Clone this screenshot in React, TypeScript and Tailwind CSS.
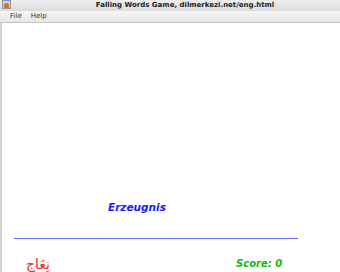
export default function App() {
  return (
    <div className="w-[340px] h-[272px] bg-white flex flex-col overflow-hidden" style={{ fontFamily: '"DejaVu Sans", sans-serif' }}>
      <div className="h-[11px] relative flex items-center justify-center pl-[30px] bg-gradient-to-b from-[#eeeeee] to-[#dcdcdc]">
        <div className="absolute left-[2px] top-0 w-[9px] h-[9px] bg-[#c9d3e0] border border-[#8a96a8] flex items-end justify-center">
          <div className="w-[5px] h-[5px] bg-[#e0701a] rounded-t-sm" />
        </div>
        <span className="text-[7px] font-bold text-[#222] leading-none">Falling Words Game, dilmerkezi.net/eng.html</span>
      </div>
      <div className="h-[12px] flex items-center gap-[9px] pl-[10px] bg-gradient-to-b from-[#f6f6f6] to-[#e6e6e6] border-b border-[#c4c4c4] text-[7px] text-[#333]">
        <span>File</span>
        <span>Help</span>
      </div>
      <div className="flex-1 flex border-l-2 border-[#d2d2d2]">
        <div className="flex-1 relative">
          <div className="absolute left-[106px] top-[177px] text-[10.5px] font-bold italic text-[#1a1aff]">Erzeugnis</div>
          <div className="absolute left-[12px] top-[215px] w-[284px] h-px bg-[#6666ff]" />
          <div className="absolute left-[24px] top-[232px] text-[14px] leading-[18px] text-[#ff1a1a]" style={{ fontFamily: '"Noto Sans", "DejaVu Sans", sans-serif' }}>نِعَاج</div>
          <div className="absolute left-[234px] top-[233px] text-[10px] font-bold italic text-[#12b812]">Score: 0</div>
        </div>
      </div>
    </div>
  );
}
